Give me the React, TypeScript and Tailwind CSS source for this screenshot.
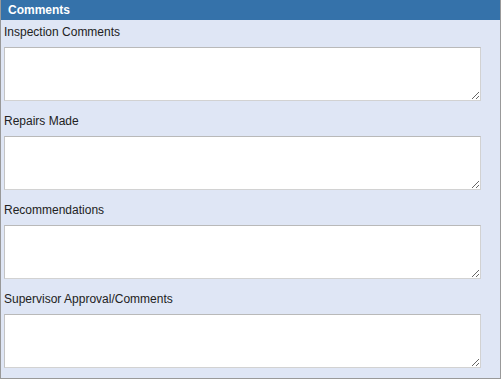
import React from "react";

const fields = [
  "Inspection Comments",
  "Repairs Made",
  "Recommendations",
  "Supervisor Approval/Comments",
];

const App: React.FC = () => {
  return (
    <div
      className="w-[501px] h-[379px] bg-[#dfe6f5] border-x border-b border-[#999999] flex flex-col"
      style={{ fontFamily: '"Liberation Sans", Arial, sans-serif' }}
    >
      <div className="h-[20px] bg-[#3572aa] text-white text-[12px] font-bold leading-[20px] pl-[7px] shrink-0">
        Comments
      </div>
      <div className="flex flex-col gap-[13px] pt-[5px] pl-[3px]">
        {fields.map((label) => (
          <div key={label} className="flex flex-col">
            <label className="text-[12px] leading-[14px] text-[#222222] mb-[8px]">
              {label}
            </label>
            <textarea className="w-[477px] h-[54px] bg-white border border-[#d2d2d2] border-t-[#b9b9b9] border-l-[#c4c4c4] outline-none" />
          </div>
        ))}
      </div>
    </div>
  );
};

export default App;
